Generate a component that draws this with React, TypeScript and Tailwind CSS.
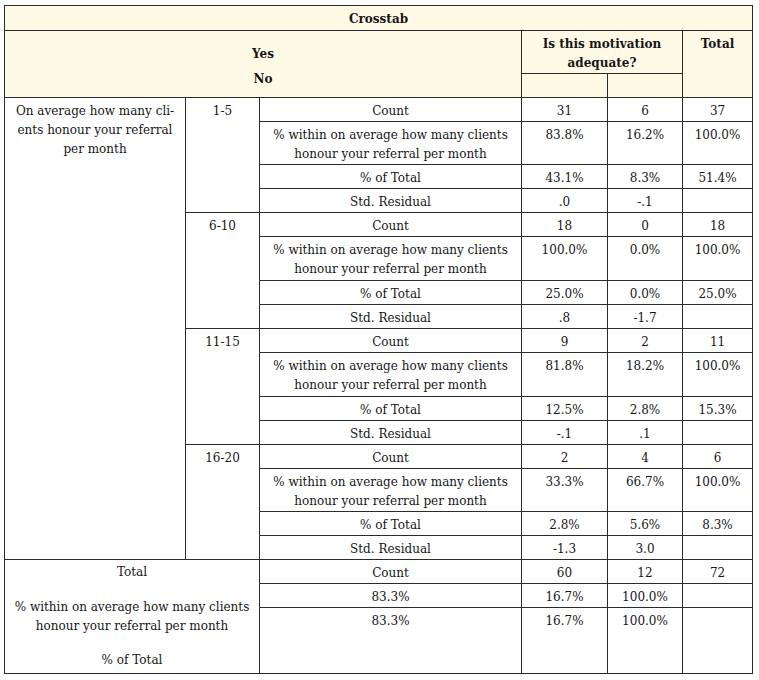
const hdr = 'bg-[#fffae6]'
const cell = 'border border-[#2a2a2a] text-center align-top px-1'

type Block = {
  range: string
  tall: string
  rows: [string, string, string, string][]
}

const blocks: Block[] = [
  {
    range: '1-5',
    tall: 'h-[42px]',
    rows: [
      ['Count', '31', '6', '37'],
      ['within', '83.8%', '16.2%', '100.0%'],
      ['% of Total', '43.1%', '8.3%', '51.4%'],
      ['Std. Residual', '.0', '-.1', ''],
    ],
  },
  {
    range: '6-10',
    tall: 'h-[44px]',
    rows: [
      ['Count', '18', '0', '18'],
      ['within', '100.0%', '0.0%', '100.0%'],
      ['% of Total', '25.0%', '0.0%', '25.0%'],
      ['Std. Residual', '.8', '-1.7', ''],
    ],
  },
  {
    range: '11-15',
    tall: 'h-[44px]',
    rows: [
      ['Count', '9', '2', '11'],
      ['within', '81.8%', '18.2%', '100.0%'],
      ['% of Total', '12.5%', '2.8%', '15.3%'],
      ['Std. Residual', '-.1', '.1', ''],
    ],
  },
  {
    range: '16-20',
    tall: 'h-[43px]',
    rows: [
      ['Count', '2', '4', '6'],
      ['within', '33.3%', '66.7%', '100.0%'],
      ['% of Total', '2.8%', '5.6%', '8.3%'],
      ['Std. Residual', '-1.3', '3.0', ''],
    ],
  },
]

function Within() {
  return (
    <>
      % within on average how many clients
      <br />
      honour your referral per month
    </>
  )
}

export default function App() {
  return (
    <div className="min-h-[680px] bg-white pl-[4px] pt-[5px] text-[#161616] font-['DejaVu_Serif',serif] text-[12px] leading-[19px]">
      <table className="w-[748px] table-fixed border-collapse">
        <colgroup>
          <col className="w-[181px]" />
          <col className="w-[74px]" />
          <col className="w-[262px]" />
          <col className="w-[86px]" />
          <col className="w-[75px]" />
          <col className="w-[70px]" />
        </colgroup>
        <thead>
          <tr className="h-[25px]">
            <th colSpan={6} className={`${cell} ${hdr} font-bold pt-[4px]`}>
              Crosstab
            </th>
          </tr>
          <tr className="h-[43px]">
            <th colSpan={3} rowSpan={2} className={`${cell} ${hdr} font-bold leading-[25px] pt-[11px]`}>
              Yes
              <br />
              No
            </th>
            <th colSpan={2} className={`${cell} ${hdr} font-bold pt-[4px]`}>
              Is this motivation
              <br />
              adequate?
            </th>
            <th rowSpan={2} className={`${cell} ${hdr} font-bold pt-[4px]`}>
              Total
            </th>
          </tr>
          <tr className="h-[24px]">
            <th className={`${cell} ${hdr}`} />
            <th className={`${cell} ${hdr}`} />
          </tr>
        </thead>
        <tbody>
          {blocks.map((b, bi) =>
            b.rows.map((r, ri) => (
              <tr key={`${bi}-${ri}`} className={r[0] === 'within' ? b.tall : 'h-[24px]'}>
                {bi === 0 && ri === 0 && (
                  <td rowSpan={16} className={`${cell} pt-[4px]`}>
                    On average how many cli-
                    <br />
                    ents honour your referral
                    <br />
                    per month
                  </td>
                )}
                {ri === 0 && (
                  <td rowSpan={4} className={`${cell} pt-[4px]`}>
                    {b.range}
                  </td>
                )}
                <td className={`${cell} pt-[4px]`}>{r[0] === 'within' ? <Within /> : r[0]}</td>
                <td className={`${cell} pt-[4px]`}>{r[1]}</td>
                <td className={`${cell} pt-[4px]`}>{r[2]}</td>
                <td className={`${cell} pt-[4px]`}>{r[3]}</td>
              </tr>
            ))
          )}
          <tr className="h-[24px]">
            <td colSpan={2} rowSpan={3} className={`${cell} pt-[3px]`}>
              <div>Total</div>
              <div className="mt-[16px]">
                <Within />
              </div>
              <div className="mt-[15px]">% of Total</div>
            </td>
            <td className={`${cell} pt-[4px]`}>Count</td>
            <td className={`${cell} pt-[4px]`}>60</td>
            <td className={`${cell} pt-[4px]`}>12</td>
            <td className={`${cell} pt-[4px]`}>72</td>
          </tr>
          <tr className="h-[24px]">
            <td className={`${cell} pt-[4px]`}>83.3%</td>
            <td className={`${cell} pt-[4px]`}>16.7%</td>
            <td className={`${cell} pt-[4px]`}>100.0%</td>
            <td className={cell} />
          </tr>
          <tr className="h-[66px]">
            <td className={`${cell} pt-[4px]`}>83.3%</td>
            <td className={`${cell} pt-[4px]`}>16.7%</td>
            <td className={`${cell} pt-[4px]`}>100.0%</td>
            <td className={cell} />
          </tr>
        </tbody>
      </table>
    </div>
  )
}
